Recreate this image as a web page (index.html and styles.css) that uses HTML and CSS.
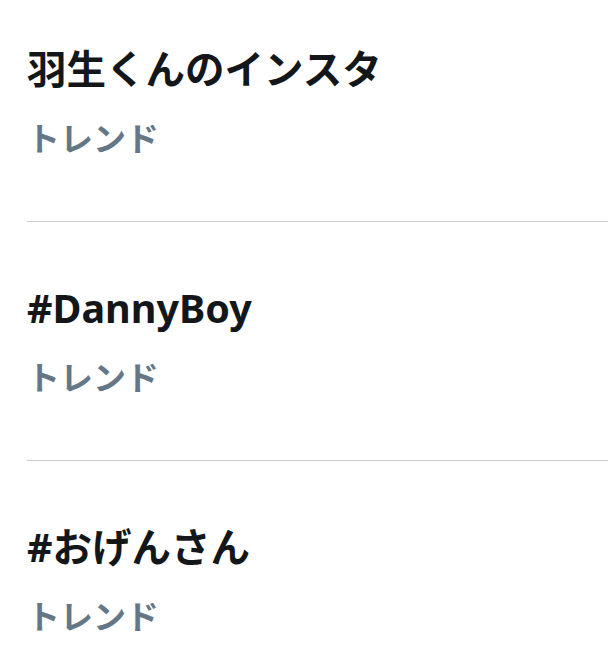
FILE: index.html
```
<!DOCTYPE html>
<html lang="ja">
<head>
    <meta charset="UTF-8">
    <meta name="viewport" content="width=device-width, initial-scale=1.0">
    <title>トレンド</title>
    <link rel="stylesheet" href="styles.css">
</head>
<body>
    <div id="trends">
        <div class="trend">
            <div class="trend-name">羽生くんのインスタ</div>
            <div class="trend-label">トレンド</div>
        </div>
        <div class="trend">
            <div class="trend-name">#DannyBoy</div>
            <div class="trend-label">トレンド</div>
        </div>
        <div class="trend">
            <div class="trend-name">#おげんさん</div>
            <div class="trend-label">トレンド</div>
        </div>
    </div>
</body>
</html>
```

FILE: styles.css
```
body, html {
    margin: 0;
    padding: 0;
    background: #ffffff;
    font-family: "Noto Sans", "Noto Sans CJK JP", sans-serif;
    overflow: hidden;
}
#trends {
    display: flex;
    flex-direction: column;
}
.trend {
    margin-left: 27px;
    padding: 61px 0 62px 0;
    border-top: 1px solid #cccccc;
    display: flex;
    flex-direction: column;
    gap: 25px;
}
.trend:first-child {
    border-top: none;
    padding-top: 44px;
}
.trend:last-child {
    padding-bottom: 0;
}
.trend-name {
    font-size: 39.5px;
    line-height: 50px;
    font-weight: bold;
    color: #14171a;
}
.trend-label {
    font-size: 33px;
    line-height: 40px;
    font-weight: bold;
    color: #657786;
}
```
